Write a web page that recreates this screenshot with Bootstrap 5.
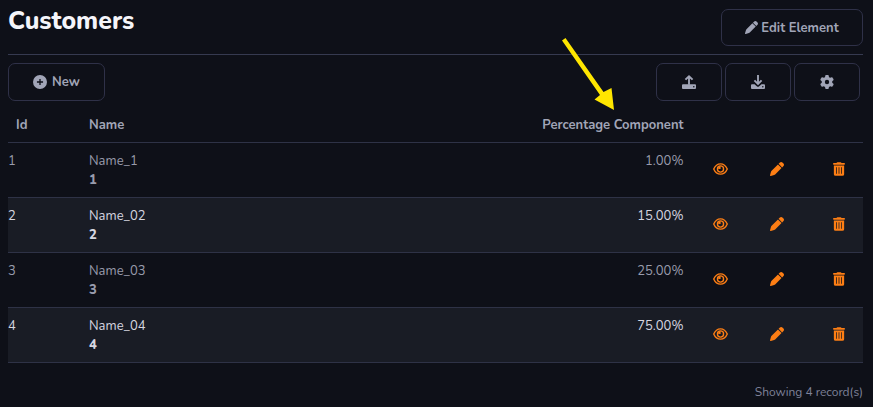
<!DOCTYPE html>
<html lang="en" data-bs-theme="dark">
<head>
<meta charset="utf-8">
<meta name="viewport" content="width=device-width, initial-scale=1">
<title>Customers</title>
<link href="https://cdn.jsdelivr.net/npm/bootstrap@5.3.0/dist/css/bootstrap.min.css" rel="stylesheet">
<style>
body{background:#0e1018;color:#92929f;font-family:Nunito,"Open Sans","Noto Sans",sans-serif;font-size:13px;line-height:19px;height:407px;overflow:hidden}
.page{padding:9px 10px 0 8px}
.head{height:46px;border-bottom:1px solid #363a50}
.head h1{font-size:24.9px;line-height:25px;font-weight:800;color:#f5f5fa}
.btn-line{--bs-btn-color:#a1a5b7;--bs-btn-border-color:#2f3148;--bs-btn-hover-color:#fff;--bs-btn-hover-border-color:#474761;--bs-btn-border-radius:7px;--bs-btn-padding-x:0;--bs-btn-padding-y:0;--bs-btn-font-size:13px;--bs-btn-font-weight:700;height:38px;width:66px;display:flex;align-items:center;justify-content:center}
.btn-line svg{margin-bottom:1px}
.btn-line span{padding-top:2px}
.btn-edit{width:142px;height:37px;gap:3px}
.btn-new{width:97px;gap:5px}
.tools{padding:8px 3px 0 0;gap:3px}
svg{fill:currentColor;flex:none;display:block}
.grid-table{--bs-table-bg:transparent;table-layout:fixed;border-color:#2e3246;width:855px}
.grid-table>:not(caption)>*>*{padding:0}
.grid-table th{height:41px;padding-top:9px!important;vertical-align:middle;color:#a1a5b7;font-weight:700}
.grid-table th:first-child{padding-left:8px!important}
.grid-table tbody tr{height:55px}
.grid-table tbody td{padding-top:9px;vertical-align:top;color:#989bac}
.grid-table tbody tr:nth-child(even) td{background:#191c25;color:#d6d6e0}
.grid-table tbody td b{display:block;font-weight:800;line-height:19px}
.grid-table tbody tr td.act{padding:0 0 2px 1px;vertical-align:middle;color:#fd7e14}
.grid-table td.act svg{margin:0 auto}
.grid-table tbody tr td.del{padding-left:17px}
.total{font-size:12px;line-height:18px;color:#7e8299;margin-top:20px}
.pointer{position:absolute;left:555px;top:32px;fill:#ffe600;pointer-events:none}
</style>
<script src="https://cdn.jsdelivr.net/npm/bootstrap@5.3.0/dist/js/bootstrap.bundle.min.js"></script>
</head>
<body>
<svg class="d-none">
<symbol id="pencil" viewBox="0 0 512 512"><path d="M291.7 89.8L58.6 322.9c-10.4 10.4-18 23.3-22.2 37.4L1 480.7c-2.5 8.4-.2 17.5 6.1 23.7s15.3 8.5 23.7 6.1l120.3-35.4c14.1-4.2 27-11.8 37.4-22.2L421.6 219.8zM362.7 18.7L314.3 67.1l130 130 48.4-48.4c25-25 25-65.5 0-90.5L453.3 18.7c-25-25-65.5-25-90.5 0z"/></symbol>
<symbol id="plus" viewBox="0 0 512 512"><path fill-rule="evenodd" d="M256 0a256 256 0 1 0 0 512A256 256 0 0 0 256 0zM232 144h48v88h88v48h-88v88h-48v-88h-88v-48h88z"/></symbol>
<symbol id="up" viewBox="0 0 512 512"><path fill-rule="evenodd" d="M36 336h440q36 0 36 36v104q0 36-36 36H36q-36 0-36-36V372q0-36 36-36zM432 398a25 25 0 1 0 .1 0z"/><path d="M222 360V124l-72 72-50-50L256 0l156 146-50 50-72-72v236z"/></symbol>
<symbol id="down" viewBox="0 0 512 512"><path fill-rule="evenodd" d="M36 336h94l82 78q44 38 88 0l82-78h94q36 0 36 36v104q0 36-36 36H36q-36 0-36-36V372q0-36 36-36zM432 400a25 25 0 1 0 .1 0z"/><path d="M222 0h68v244l72-72 50 50-156 150-156-150 50-50 72 72z"/></symbol>
<symbol id="gear" viewBox="0 0 512 512"><path fill-rule="evenodd" d="M495.9 166.6c3.2 8.7.5 18.4-6.4 24.6l-43.3 39.4c1.1 8.3 1.7 16.8 1.7 25.4s-.6 17.1-1.7 25.4l43.3 39.4c6.9 6.2 9.6 15.9 6.4 24.6-4.4 11.9-9.7 23.3-15.8 34.3l-4.7 8.1c-6.6 11-14 21.4-22.1 31.2-5.9 7.2-15.7 9.6-24.5 6.8l-55.7-17.7c-13.4 10.3-28.2 18.9-44 25.4l-12.5 57.1c-2 9.1-9 16.3-18.2 17.8-13.8 2.3-28 3.5-42.5 3.5s-28.7-1.2-42.5-3.5c-9.2-1.5-16.2-8.7-18.2-17.8l-12.5-57.1c-15.8-6.5-30.6-15.1-44-25.4L83.1 425.9c-8.8 2.8-18.6.3-24.5-6.8-8.1-9.8-15.5-20.2-22.1-31.2l-4.7-8.1c-6.1-11-11.4-22.4-15.8-34.3-3.2-8.7-.5-18.4 6.4-24.6l43.3-39.4C64.6 273.1 64 264.6 64 256s.6-17.1 1.7-25.4L22.4 191.2c-6.9-6.2-9.6-15.9-6.4-24.6 4.4-11.9 9.7-23.3 15.8-34.3l4.7-8.1c6.6-11 14-21.4 22.1-31.2 5.9-7.2 15.7-9.6 24.5-6.8l55.7 17.7c13.4-10.3 28.2-18.9 44-25.4l12.5-57.1c2-9.1 9-16.3 18.2-17.8C227.3 1.2 241.5 0 256 0s28.7 1.2 42.5 3.5c9.2 1.5 16.2 8.7 18.2 17.8l12.5 57.1c15.8 6.5 30.6 15.1 44 25.4l55.7-17.7c8.8-2.8 18.6-.3 24.5 6.8 8.1 9.8 15.5 20.2 22.1 31.2l4.7 8.1c6.1 11 11.4 22.4 15.8 34.3zM256 336a80 80 0 1 0 0-160 80 80 0 1 0 0 160z"/></symbol>
<symbol id="eye" viewBox="0 0 576 512"><path fill="none" stroke="currentColor" stroke-width="54" d="M28 256C74 148 166 58 288 58s214 90 260 198c-46 108-138 198-260 198S74 364 28 256z"/><circle cx="288" cy="256" r="118" fill="none" stroke="currentColor" stroke-width="52"/><path d="M200 150h92v104h-92z"/></symbol>
<symbol id="trash" viewBox="0 0 448 512"><path fill-rule="evenodd" d="M135 18Q144 0 164 0h120q20 0 29 18l7 14h96q32 0 32 32t-32 32H32Q0 96 0 64t32-32h96zM32 128h384v320q0 64-64 64H96q-64 0-64-64zM114 192v240h28V192zM210 192v240h28V192zM306 192v240h28V192z"/></symbol>
</svg>
<main class="page">
  <header class="head d-flex justify-content-between align-items-start">
    <h1 class="m-0">Customers</h1>
    <button class="btn btn-line btn-edit"><svg width="13" height="13"><use href="#pencil"/></svg><span>Edit Element</span></button>
  </header>
  <div class="tools d-flex">
    <button class="btn btn-line btn-new me-auto"><svg width="14" height="14"><use href="#plus"/></svg><span>New</span></button>
    <button class="btn btn-line" aria-label="Import"><svg width="14" height="14"><use href="#up"/></svg></button>
    <button class="btn btn-line" aria-label="Export"><svg width="14" height="14"><use href="#down"/></svg></button>
    <button class="btn btn-line" aria-label="Settings"><svg width="14" height="14"><use href="#gear"/></svg></button>
  </div>
  <table class="table grid-table mb-0">
    <colgroup><col style="width:81px"><col style="width:424.5px"><col style="width:170px"><col style="width:72px"><col style="width:42.5px"><col style="width:65px"></colgroup>
    <thead><tr><th>Id</th><th>Name</th><th class="text-end">Percentage Component</th><th></th><th></th><th></th></tr></thead>
    <tbody id="rows"></tbody>
  </table>
  <div class="total text-end">Showing 4 record(s)</div>
</main>
<svg class="pointer" width="65" height="82"><path d="M7 8.5 10.5 6 48.5 60 56.5 56 59 78 39.5 67.5 45 63z"/></svg>
<script>
const icon=(n,w)=>`<svg width="${w}" height="14"><use href="#${n}"/></svg>`;
document.getElementById('rows').innerHTML=[['Name_1','1.00%'],['Name_02','15.00%'],['Name_03','25.00%'],['Name_04','75.00%']].map(([n,p],i)=>
`<tr><td>${i+1}</td><td>${n}<b>${i+1}</b></td><td class="text-end">${p}</td><td class="act">${icon('eye',15)}</td><td class="act">${icon('pencil',14)}</td><td class="act del">${icon('trash',12)}</td></tr>`).join('');
</script>
</body>
</html>
